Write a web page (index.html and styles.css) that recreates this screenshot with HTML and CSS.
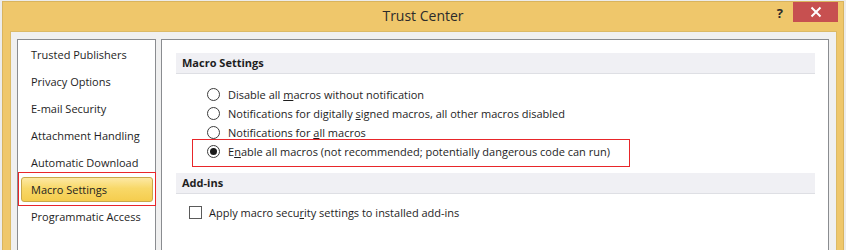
FILE: index.html
```html
<!DOCTYPE html>
<html>
<head>
<meta charset="utf-8">
<link rel="stylesheet" href="styles.css">
</head>
<body>
<div class="window">
  <div class="titlebar">
    <div></div>
    <div class="title">Trust Center</div>
    <div class="controls">
      <span class="help">?</span>
      <span class="close"><svg width="12" height="12" viewBox="0 0 12 12"><path d="M1.5 1.5 L10.5 10.5 M10.5 1.5 L1.5 10.5" stroke="#fff" stroke-width="2"/></svg></span>
    </div>
  </div>
  <div class="client">
    <div class="nav">
      <div class="nav-item">Trusted Publishers</div>
      <div class="nav-item">Privacy Options</div>
      <div class="nav-item">E-mail Security</div>
      <div class="nav-item">Attachment Handling</div>
      <div class="nav-item">Automatic Download</div>
      <div class="nav-item selected"><span>Macro Settings</span></div>
      <div class="nav-item">Programmatic Access</div>
    </div>
    <div class="content">
      <div class="band first">Macro Settings</div>
      <div class="options">
        <div class="opt"><span class="radio"></span><span>Disable all <u>m</u>acros without notification</span></div>
        <div class="opt"><span class="radio"></span><span>Notifications for digitally <u>s</u>igned macros, all other macros disabled</span></div>
        <div class="opt"><span class="radio"></span><span>Notifications for <u>a</u>ll macros</span></div>
        <div class="opt"><span class="radio on"></span><span>E<u>n</u>able all macros (not recommended; potentially dangerous code can run)</span></div>
      </div>
      <div class="band second">Add-ins</div>
      <div class="check-row"><span class="checkbox"></span><span>Apply macro secu<u>r</u>ity settings to installed add-ins</span></div>
    </div>
  </div>
  <div class="annot annot-nav"></div>
  <div class="annot annot-opt"></div>
</div>
</body>
</html>
```
FILE: styles.css
```css
* { box-sizing: border-box; }
html, body { margin: 0; padding: 0; }
body {
  background: #ececec;
  width: 846px;
  height: 250px;
  overflow: hidden;
  padding: 1px 2px 0 2px;
  font-family: "Segoe UI", "Open Sans", "Noto Sans", sans-serif;
  color: #1e1e1e;
}
.window {
  position: relative;
  width: 842px;
  height: 260px;
  background: #efc76b;
  border: 1px solid #d9b45e;
}
.titlebar {
  height: 29px;
  display: grid;
  grid-template-columns: 1fr auto 1fr;
  align-items: start;
}
.title {
  font-size: 14px;
  line-height: 28px;
  color: #2b2b2b;
}
.controls {
  display: flex;
  justify-content: flex-end;
  align-items: flex-start;
  padding-right: 5px;
}
.help {
  font-size: 13px;
  font-weight: bold;
  color: #2a2a2a;
  line-height: 22px;
  margin-right: 10px;
}
.close {
  width: 45px;
  height: 20px;
  background: #c75050;
  display: flex;
  align-items: center;
  justify-content: center;
}
.client {
  margin: 0 6px 0 7px;
  height: 230px;
  background: #f0f0f0;
  border: 1px solid #dcba66;
  padding: 7px 7px 0 6px;
  display: flex;
  gap: 5px;
}
.nav {
  width: 139px;
  background: #fff;
  border: 1px solid #8a8c90;
  padding: 1px 2px 0 3px;
  font-size: 11px;
}
.nav-item {
  height: 27px;
  line-height: 27px;
  padding-left: 10px;
}
.nav-item.selected {
  padding: 1px 0 1px 0;
}
.nav-item.selected span {
  display: block;
  height: 25px;
  line-height: 23px;
  padding-left: 9px;
  border: 1px solid #c9a84a;
  border-radius: 3px;
  background: linear-gradient(#fde9a4, #f8d868 45%, #f5cd4e);
}
.content {
  flex: 1;
  background: #fff;
  border: 1px solid #8a8c90;
  padding-top: 13px;
  font-size: 11px;
}
.band {
  margin: 0 13px 0 14px;
  height: 21px;
  line-height: 20px;
  background: #f0f0f4;
  border-bottom: 1px solid #dedfe4;
  padding-left: 6px;
  font-weight: bold;
}
.options {
  padding: 11px 0 0 45px;
}
.opt {
  height: 19px;
  display: flex;
  align-items: center;
  gap: 8px;
}
.radio {
  width: 13px;
  height: 13px;
  border: 1px solid #3c3c3c;
  border-radius: 50%;
  background: #fff;
  display: flex;
  align-items: center;
  justify-content: center;
  flex: none;
}
.radio.on::after {
  content: "";
  width: 7px;
  height: 7px;
  border-radius: 50%;
  background: #1a1a1a;
}
.band.second {
  margin-top: 12px;
}
.check-row {
  margin: 11px 0 0 27px;
  height: 14px;
  display: flex;
  align-items: center;
  gap: 7px;
}
.checkbox {
  width: 13px;
  height: 13px;
  border: 1px solid #5a5a5a;
  background: #fff;
  flex: none;
}
u { text-decoration-thickness: 1px; text-underline-offset: 1px; }
.annot {
  position: absolute;
  border: 1px solid #e8262a;
}
.annot-nav {
  left: 15px;
  top: 170px;
  width: 138px;
  height: 34px;
}
.annot-opt {
  left: 189px;
  top: 137px;
  width: 438px;
  height: 28px;
}
```
